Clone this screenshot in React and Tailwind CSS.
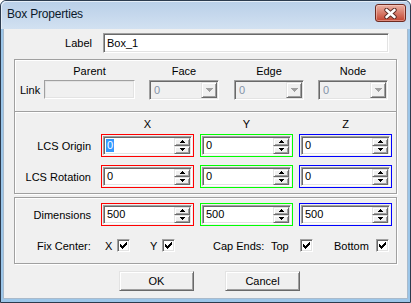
import React from "react";

function Sunken({ className = "", children }) {
  return (
    <div
      className={
        "border border-t-[#a0a0a0] border-l-[#a0a0a0] border-b-white border-r-white shadow-[inset_1px_1px_0_#696969,inset_-1px_-1px_0_#e3e3e3] " +
        className
      }
    >
      {children}
    </div>
  );
}

function Raised({ className = "", children }) {
  return (
    <div
      className={
        "bg-[#f0f0f0] border border-t-[#e3e3e3] border-l-[#e3e3e3] border-b-[#696969] border-r-[#696969] shadow-[inset_1px_1px_0_#fff,inset_-1px_-1px_0_#a0a0a0] " +
        className
      }
    >
      {children}
    </div>
  );
}

function Arrow({ up = false, color = "#000", w = 5, h = 3 }) {
  return (
    <svg width={w} height={h} viewBox={`0 0 ${w} ${h}`} shapeRendering="crispEdges">
      {up ? (
        <path d={`M0 ${h} L${w / 2} 0 L${w} ${h} Z`} fill={color} />
      ) : (
        <path d={`M0 0 L${w} 0 L${w / 2} ${h} Z`} fill={color} />
      )}
    </svg>
  );
}

function Combo() {
  return (
    <Sunken className="w-[70px] h-[20px] bg-[#f0f0f0] flex items-center justify-between pl-[4px] pr-px">
      <span className="text-[#8592a8]">0</span>
      <Raised className="w-[16px] h-[16px] flex items-center justify-center">
        <Arrow color="#a0a0a0" w={7} h={4} />
      </Raised>
    </Sunken>
  );
}

function Spin() {
  return (
    <div className="flex flex-col">
      <Raised className="w-[16px] h-[8px] flex items-center justify-center">
        <Arrow up />
      </Raised>
      <Raised className="w-[16px] h-[8px] flex items-center justify-center">
        <Arrow />
      </Raised>
    </div>
  );
}

function ColorField({ border, value, selected = false, ml = "" }) {
  return (
    <div className={"w-[93px] h-[23px] border-solid border-[1px] p-px bg-[#f0f0f0] " + border + " " + ml}>
      <Sunken className="h-full bg-white flex items-center justify-between pl-[2px] pr-px">
        <span
          className={
            selected
              ? "bg-[#3399ff] text-white px-px leading-[13px]"
              : "px-px leading-[13px]"
          }
        >
          {value}
        </span>
        <Spin />
      </Sunken>
    </div>
  );
}

function Check() {
  return (
    <Sunken className="w-[13px] h-[13px] bg-white flex items-center justify-center">
      <svg width="7" height="7" viewBox="0 0 7 7" shapeRendering="crispEdges">
        <path
          d="M6 0h1v3h-1z M5 1h1v3h-1z M4 2h1v3h-1z M3 3h1v3h-1z M2 4h1v3h-1z M1 3h1v3h-1z M0 2h1v3h-1z"
          fill="#000"
        />
      </svg>
    </Sunken>
  );
}

const group =
  "ml-[10px] w-[383px] border border-[#a0a0a0] shadow-[inset_1px_1px_0_#fff,1px_1px_0_#fff]";

export default function App() {
  return (
    <div className="w-[411px] h-[303px] flex flex-col rounded-t-[6px] border border-[#2c3b4e] bg-[#9cc6e9] font-['Liberation_Sans',Arial,sans-serif] text-[11px] leading-[14px] text-black overflow-hidden">
      {/* Title bar */}
      <div className="h-[28px] flex items-start justify-between bg-gradient-to-b from-[#b9cfe8] to-[#d2e1f1] rounded-t-[5px] shadow-[inset_1px_1px_0_#e4edf7]">
        <div className="pl-[6px] pt-[6px] text-[12px] leading-[15px] text-[#0b1a2b] tracking-[-0.2px]">
          Box Properties
        </div>
        <div className="mt-[3px] mr-[4px] w-[31px] h-[18px] rounded-[3px] border border-[#6e2a20] bg-gradient-to-b from-[#eab1a4] via-[#d77b6a] to-[#c2422f] shadow-[inset_0_0_0_1px_rgba(255,220,210,0.45)] flex items-center justify-center">
          <svg width="13" height="11" viewBox="0 0 13 11">
            <path d="M2.5 2 L10.5 9 M10.5 2 L2.5 9" stroke="#5a2a24" strokeWidth="4.4" strokeLinecap="round" />
            <path d="M2.5 2 L10.5 9 M10.5 2 L2.5 9" stroke="#ffffff" strokeWidth="2.6" strokeLinecap="round" />
          </svg>
        </div>
      </div>

      {/* Content */}
      <div className="mx-[2px] mb-[3px] flex-1 bg-[#f0f0f0] border-x border-b border-[#a9bacb] flex flex-col">
        {/* Label row */}
        <div className="pt-[4px] flex items-center">
          <div className="w-[88px] text-right">Label</div>
          <Sunken className="ml-[11px] w-[286px] h-[20px] bg-white flex items-center pl-[3px]">
            Box_1
          </Sunken>
        </div>

        {/* Link group */}
        <div className={group + " mt-[6px] pt-[4px] pb-[11px]"}>
          <div className="h-[14px] flex items-center">
            <div className="w-[29px]" />
            <div className="w-[91px] text-center">Parent</div>
            <div className="ml-[14px] w-[70px] text-center">Face</div>
            <div className="ml-[15px] w-[70px] text-center">Edge</div>
            <div className="ml-[14px] w-[70px] text-center">Node</div>
          </div>
          <div className="mt-[2px] h-[20px] flex items-start">
            <div className="pl-[5px] w-[29px] h-[19px] flex items-center">Link</div>
            <div className="w-[91px] h-[19px] bg-[#f0f0f0] border border-t-[#a0a0a0] border-l-[#a0a0a0] border-b-white border-r-white shadow-[inset_-1px_-1px_0_#e3e3e3,inset_1px_1px_0_#e3e3e3]" />
            <div className="ml-[14px]">
              <Combo />
            </div>
            <div className="ml-[15px]">
              <Combo />
            </div>
            <div className="ml-[14px]">
              <Combo />
            </div>
          </div>
        </div>

        {/* LCS group */}
        <div className={group + " border-t-0 pt-[5px] pb-[5px]"}>
          <div className="h-[14px] flex items-center">
            <div className="w-[86px]" />
            <div className="w-[93px] text-center">X</div>
            <div className="ml-[6px] w-[93px] text-center">Y</div>
            <div className="ml-[6px] w-[93px] text-center">Z</div>
          </div>
          <div className="mt-[3px] flex items-center">
            <div className="w-[76px] text-right">LCS Origin</div>
            <div className="ml-[10px] flex">
              <ColorField border="border-[#ff0000]" value="0" selected />
              <ColorField border="border-[#00ff00]" value="0" ml="ml-[6px]" />
              <ColorField border="border-[#0000ff]" value="0" ml="ml-[6px]" />
            </div>
          </div>
          <div className="mt-[8px] flex items-center">
            <div className="w-[76px] text-right">LCS Rotation</div>
            <div className="ml-[10px] flex">
              <ColorField border="border-[#ff0000]" value="0" />
              <ColorField border="border-[#00ff00]" value="0" ml="ml-[6px]" />
              <ColorField border="border-[#0000ff]" value="0" ml="ml-[6px]" />
            </div>
          </div>
        </div>

        {/* Dimensions group */}
        <div className={group + " mt-[3px] pt-[5px] pb-[11px]"}>
          <div className="flex items-center">
            <div className="w-[76px] text-right">Dimensions</div>
            <div className="ml-[10px] flex">
              <ColorField border="border-[#ff0000]" value="500" />
              <ColorField border="border-[#00ff00]" value="500" ml="ml-[6px]" />
              <ColorField border="border-[#0000ff]" value="500" ml="ml-[6px]" />
            </div>
          </div>
          <div className="mt-[13px] h-[13px] flex items-center">
            <div className="ml-[22px] w-[68px]">Fix Center:</div>
            <div className="w-[12px]">X</div>
            <Check />
            <div className="ml-[20px] w-[12px]">Y</div>
            <Check />
            <div className="ml-[38px] w-[58px]">Cap Ends:</div>
            <div className="w-[29px]">Top</div>
            <Check />
            <div className="ml-[21px] w-[42px]">Bottom</div>
            <Check />
          </div>
        </div>

        {/* Buttons */}
        <div className="mt-[7px] flex">
          <Raised className="ml-[115px] w-[75px] h-[20px] flex items-center justify-center">OK</Raised>
          <Raised className="ml-[31px] w-[75px] h-[20px] flex items-center justify-center">Cancel</Raised>
        </div>
      </div>
    </div>
  );
}
